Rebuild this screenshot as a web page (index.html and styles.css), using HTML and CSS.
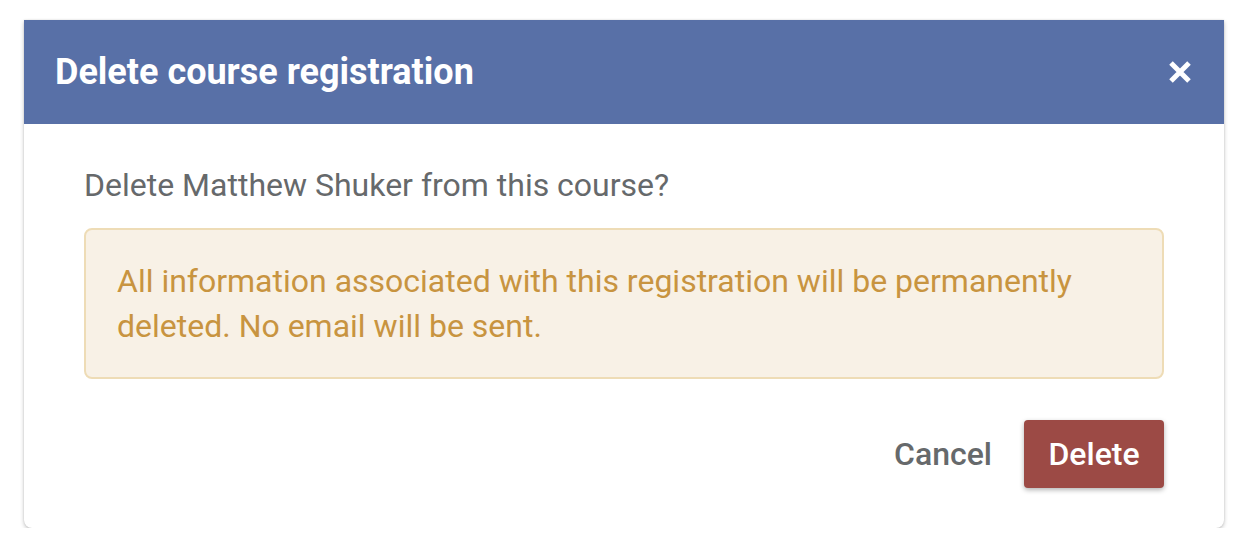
FILE: index.html
```html
<!DOCTYPE html>
<html>
<head>
<meta charset="utf-8">
<link rel="stylesheet" href="styles.css">
</head>
<body>
<div class="dialog">
  <div class="dialog-header">
    <h1 class="dialog-title">Delete course registration</h1>
    <button class="close-btn" aria-label="Close">
      <svg width="24" height="24" viewBox="0 0 24 24"><path d="M3 3 L21 21 M21 3 L3 21" stroke="#fff" stroke-width="5" stroke-linecap="butt"/></svg>
    </button>
  </div>
  <div class="dialog-body">
    <p class="question">Delete Matthew Shuker from this course?</p>
    <div class="alert">All information associated with this registration will be permanently deleted. No email will be sent.</div>
  </div>
  <div class="dialog-actions">
    <button class="btn btn-text">Cancel</button>
    <button class="btn btn-danger">Delete</button>
  </div>
</div>
</body>
</html>
```
FILE: styles.css
```css
html, body {
  margin: 0;
  padding: 0;
  background: #fff;
}
body {
  padding: 20px 28px 0 24px;
  font-family: Roboto, "Liberation Sans", sans-serif;
}
.dialog {
  width: 1200px;
  background: #fff;
  border-radius: 0 0 8px 8px;
  box-shadow: 0 2px 4px rgba(0,0,0,0.22), 0 0 2px rgba(0,0,0,0.12);
}
.dialog-header {
  height: 104px;
  background: #5870a7;
  display: flex;
  align-items: center;
  justify-content: space-between;
  padding: 0 32px 0 31px;
  box-sizing: border-box;
}
.dialog-title {
  margin: 0;
  color: #fff;
  font-size: 36px;
  font-weight: 700;
}
.close-btn {
  background: none;
  border: 0;
  padding: 0;
  width: 24px;
  height: 24px;
  display: flex;
}
.dialog-body {
  padding: 0 60px 0 60px;
}
.question {
  margin: 0;
  padding-top: 42px;
  font-size: 32px;
  line-height: 38px;
  color: #66696b;
}
.alert {
  margin-top: 24px;
  border: 2px solid #eedcb6;
  background: #f8f1e6;
  border-radius: 8px;
  padding: 29px 30px 28px 31px;
  font-size: 32px;
  line-height: 45px;
  color: #c89440;
}
.dialog-actions {
  display: flex;
  justify-content: flex-end;
  align-items: center;
  gap: 32px;
  padding: 41px 60px 40px 60px;
}
.btn {
  font-family: Roboto, "Liberation Sans", sans-serif;
  font-size: 32px;
  font-weight: 500;
  border: 0;
  background: none;
  padding: 0;
  cursor: pointer;
}
.btn-text {
  color: #66696b;
}
.btn-danger {
  background: #9c4a45;
  color: #fff;
  width: 140px;
  height: 68px;
  border-radius: 4px;
  box-shadow: 0 2px 5px rgba(0,0,0,0.3);
}
```
